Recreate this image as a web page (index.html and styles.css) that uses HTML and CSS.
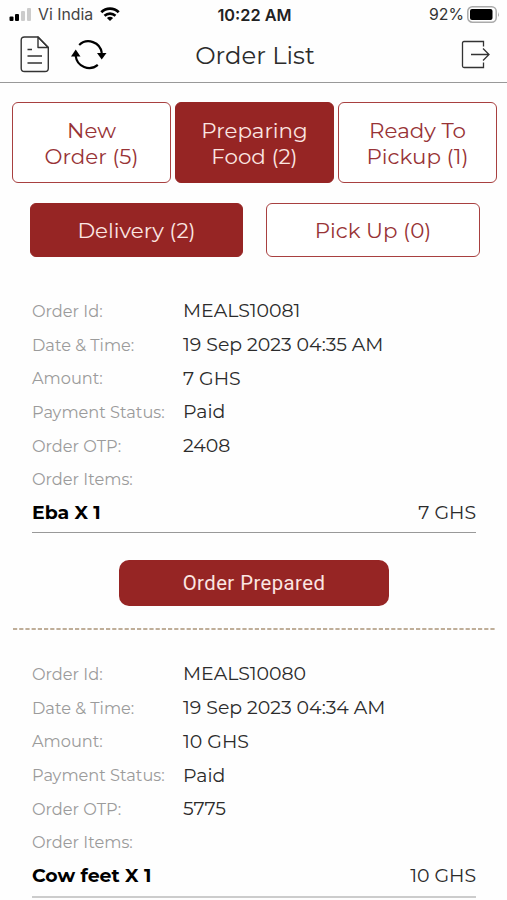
FILE: index.html
```html
<!DOCTYPE html>
<html lang="en">
<head>
    <meta charset="UTF-8">
    <meta name="viewport" content="width=device-width, initial-scale=1.0">
    <title>Order List</title>
    <link rel="stylesheet" href="styles.css">
</head>

<body>
    <div class="status-bar">
        <div class="status-left">
            <svg class="signal" width="24" height="14" viewBox="0 0 24 14">
                <rect x="0.5" y="8.5" width="4" height="4.5" rx="1" fill="#000"/>
                <rect x="6" y="6" width="4" height="7" rx="1" fill="#000"/>
                <rect x="12" y="3" width="4" height="10" rx="1" fill="#ccc"/>
                <rect x="18" y="0" width="4" height="13" rx="1" fill="#ccc"/>
            </svg>
            <span class="carrier">Vi India</span>
            <svg class="wifi" width="20" height="15" viewBox="0 0 20 15">
                <path d="M1.3 5.2C6.2 .4 13.8 .4 18.7 5.2" fill="none" stroke="#000" stroke-width="2.8"/>
                <path d="M4.5 8.8C7.7 5.9 12.3 5.9 15.5 8.8" fill="none" stroke="#000" stroke-width="2.6"/>
                <path d="M10 14L6.9 11Q10 8.7 13.1 11Z" fill="#000"/>
            </svg>
        </div>
        <div class="clock">10:22 AM</div>
        <div class="status-right">
            <span class="percent">92%</span>
            <svg width="33" height="17" viewBox="0 0 33 17">
                <rect x="0.8" y="0.8" width="28.4" height="15.4" rx="4.5" fill="none" stroke="#aaa" stroke-width="1.5"/>
                <rect x="3" y="3" width="22.5" height="11" rx="2" fill="#000"/>
                <path d="M31 6Q32.8 8.5 31 11Z" fill="#aaa"/>
            </svg>
        </div>
    </div>

    <header class="header">
        <div class="header-left">
            <!-- document -->
            <svg width="30" height="37" viewBox="0 0 30 37" fill="none" stroke="#333" stroke-width="1.4" stroke-linejoin="round">
                <path d="M18 1H4.5Q1.2 1 1.2 4.3V32.2Q1.2 35.5 4.5 35.5H25Q28.3 35.5 28.3 32.2V11.500Z"/>
                <path d="M18 1V11.5H28.3Z"/>
                <path d="M7.5 13.500H12M7.500 20H22M7.500 27H22"/>
            </svg>
            <!-- refresh -->
            <svg class="refresh" width="36" height="32" viewBox="0 0 36 32">
                <path d="M8.2 6A13.500 13.500 0 0 1 30.800 14" fill="none" stroke="#000" stroke-width="2.200"/>
                <path d="M26.800 25.800A13.500 13.500 0 0 1 4.700 17" fill="none" stroke="#000" stroke-width="2.200"/>
                <path d="M26 14H35.500L30.700 20.500Z" fill="#000"/>
                <path d="M0 17.500H9.500L4.700 10.500Z" fill="#000"/>
            </svg>
        </div>
        <h1 class="title">Order List</h1>
        <!-- logout -->
        <svg class="logout" width="29" height="29" viewBox="0 0 29 29" fill="none" stroke="#333" stroke-width="1.3">
            <path d="M22.500 6.500V1.500H3Q1.500 1.500 1.500 3V26Q1.500 27.500 3 27.500H22.500V22.500"/>
            <path d="M10 14.500H28M22 8.500L28 14.500L22 20.500"/>
        </svg>
    </header>

    <div class="tabs">
        <button class="tab">New<br>Order (5)</button>
        <button class="tab active">Preparing<br>Food (2)</button>
        <button class="tab">Ready To<br>Pickup (1)</button>
    </div>

    <div class="sub-tabs">
        <button class="tab active">Delivery (2)</button>
        <button class="tab">Pick Up (0)</button>
    </div>

    <div class="order">
        <div class="row"><span class="label">Order Id:</span><span class="value">MEALS10081</span></div>
        <div class="row"><span class="label">Date &amp; Time:</span><span class="value">19 Sep 2023 04:35 AM</span></div>
        <div class="row"><span class="label">Amount:</span><span class="value">7 GHS</span></div>
        <div class="row"><span class="label">Payment Status:</span><span class="value">Paid</span></div>
        <div class="row"><span class="label">Order OTP:</span><span class="value">2408</span></div>
        <div class="row"><span class="label">Order Items:</span></div>
        <div class="item"><strong>Eba X 1</strong><span class="value">7 GHS</span></div>
        <button class="prepared">Order Prepared</button>
    </div>

    <svg class="divider" width="483" height="2"><path d="M0 1H483" stroke="#ab9478" stroke-width="1.5" stroke-dasharray="4.200 2"/></svg>

    <div class="order order-last">
        <div class="row"><span class="label">Order Id:</span><span class="value">MEALS10080</span></div>
        <div class="row"><span class="label">Date &amp; Time:</span><span class="value">19 Sep 2023 04:34 AM</span></div>
        <div class="row"><span class="label">Amount:</span><span class="value">10 GHS</span></div>
        <div class="row"><span class="label">Payment Status:</span><span class="value">Paid</span></div>
        <div class="row"><span class="label">Order OTP:</span><span class="value">5775</span></div>
        <div class="row"><span class="label">Order Items:</span></div>
        <div class="item"><strong>Cow feet X 1</strong><span class="value">10 GHS</span></div>
    </div>
</body>
</html>
```
FILE: styles.css
```css
* {
    box-sizing: border-box;
}
body {
    margin: 0;
    height: 900px;
    overflow: hidden;
    background-color: #fefefe;
    color: #2b2b2b;
    font-family: Montserrat, Inter, sans-serif;
}
svg {
    display: block;
    flex-shrink: 0;
}
button {
    padding: 0;
    font-family: inherit;
}
.status-bar {
    display: grid;
    grid-template-columns: 1fr auto 1fr;
    align-items: center;
    height: 29px;
    padding: 0 7px 0 9px;
    font-family: Inter, sans-serif;
    font-size: 16px;
}
.status-left, .status-right {
    display: flex;
    align-items: center;
}
.status-right {
    justify-content: flex-end;
    gap: 3px;
}
.carrier {
    margin-left: 5px;
    color: #444;
    font-size: 15.8px;
}
.wifi {
    margin-left: 7px;
}
.clock {
    font-size: 16.3px;
    font-weight: 600;
    color: #222;
}
.percent {
    color: #333;
    font-size: 15.8px;
}
.header {
    display: grid;
    grid-template-columns: 1fr auto 1fr;
    align-items: center;
    height: 54px;
    padding: 0 17px 2px 20px;
    border-bottom: 1px solid #999;
}
.header-left {
    display: flex;
    align-items: center;
}
.refresh {
    margin-left: 21px;
}
.title {
    margin: 0;
    font-size: 24.3px;
    font-weight: 400;
}
.logout {
    justify-self: end;
}
.tabs {
    display: grid;
    grid-template-columns: repeat(3, 1fr);
    gap: 4px;
    height: 81px;
    margin: 19px 10px 0 12px;
}
.tab {
    border: 1px solid #a84040;
    border-radius: 6px;
    background-color: #fff;
    color: #983336;
    font-size: 21.4px;
    font-weight: 400;
    line-height: 26px;
}
.tab.active {
    border-color: #962524;
    background-color: #962524;
    color: #fbe6e2;
}
.sub-tabs {
    display: grid;
    grid-template-columns: 213px 214px;
    gap: 23px;
    height: 54px;
    margin: 20px 27px 0 30px;
}
.order {
    display: flex;
    flex-direction: column;
    margin: 37px 31px 0 32px;
}
.row {
    display: flex;
    align-items: center;
    height: 33.7px;
}
.label {
    width: 151px;
    color: #9b9b9b;
    font-size: 16.2px;
}
.value {
    font-size: 18.9px;
}
.item {
    display: flex;
    justify-content: space-between;
    align-items: center;
    height: 37px;
    padding-bottom: 4px;
    border-bottom: 1px solid #999;
    font-size: 18.9px;
}
.item strong {
    color: #000;
    font-weight: 700;
}
.prepared {
    align-self: center;
    width: 270px;
    height: 46px;
    margin-top: 27px;
    border: none;
    border-radius: 10px;
    background-color: #962524;
    color: #fbe6e2;
    font-family: Roboto, sans-serif;
    font-size: 20.3px;
    letter-spacing: 0.45px;
}
.divider {
    margin: 22px 0 0 13px;
}
.order-last {
    margin-top: 27px;
}
.order-last .item {
    height: 39px;
    border-bottom: 2px solid #ccc;
}
```
